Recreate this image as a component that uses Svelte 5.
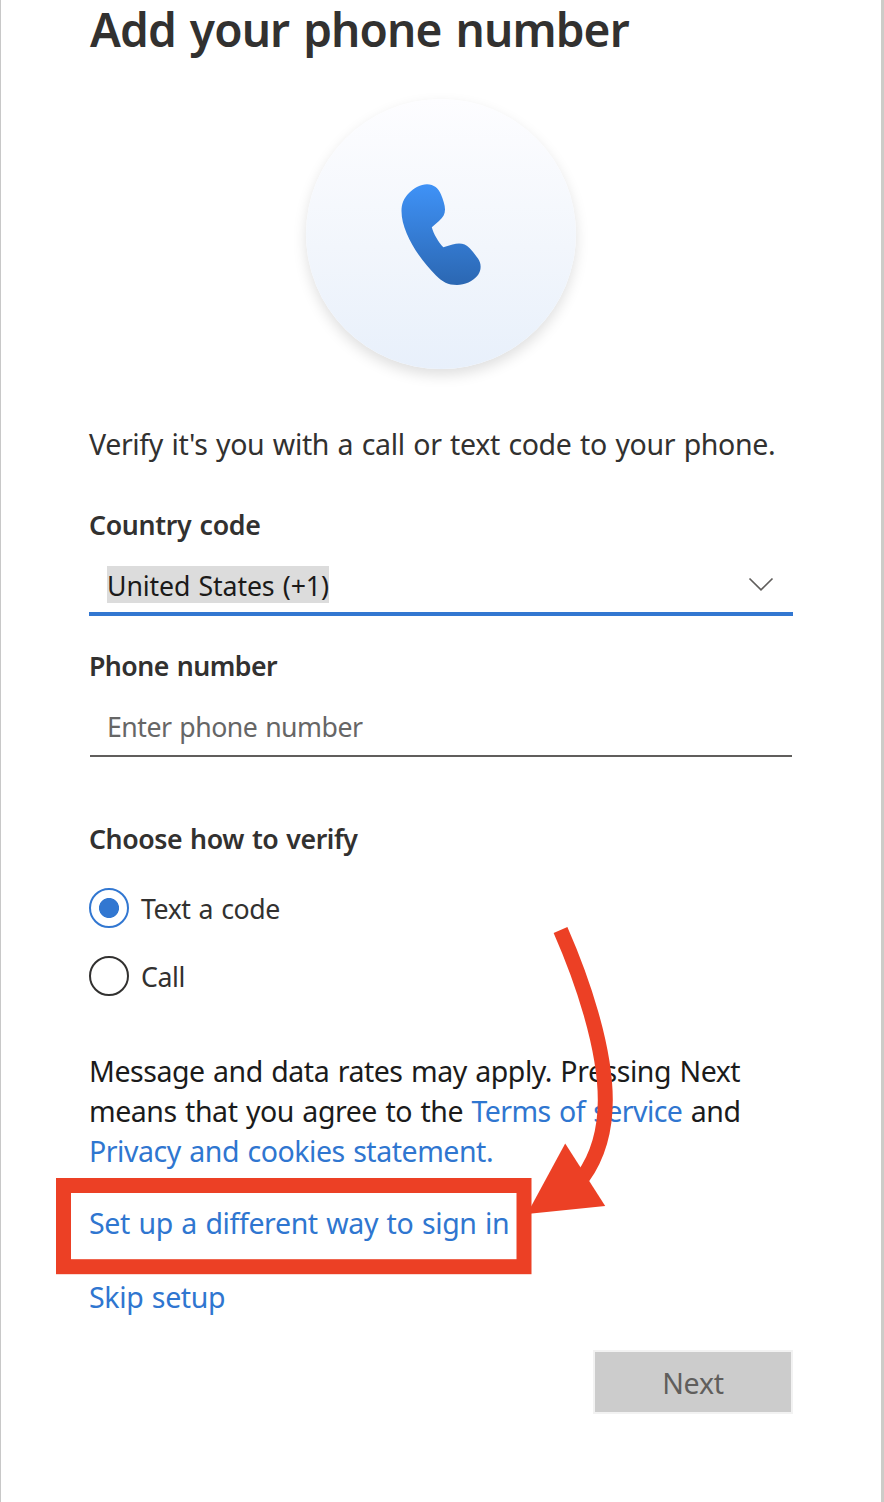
<script>
  let method = $state('text');
</script>

<main class="dialog">
  <h1>Add your phone number</h1>
  <div class="badge">
    <svg width="270" height="270" viewBox="306 99 270 270" aria-hidden="true">
      <defs>
        <linearGradient id="handset" x1="0" y1="0" x2="0" y2="1">
          <stop offset="0" stop-color="#3f92f7" />
          <stop offset="1" stop-color="#2b67b2" />
        </linearGradient>
      </defs>
      <path fill="url(#handset)" d="M401.5 211C401.5 204 403.5 198.500 409 193C414 188 420.500 184.300 427 184.300C434 184.300 438.500 188.500 441 194.500C443 199.500 445 205 445 209.500C445 214 443 217.500 439 221L431.800 227.200C433.500 234 438.500 242 443.300 247.300L452.500 244.500C460 242.500 465 243.500 469.500 248C472.500 251.200 475 254.500 478 258.500C481.500 263.500 481.500 270 478 275C473 281.500 464.500 285 457 285C448 285 442.500 282 436 275.500C418.500 258 401.500 232 401.500 211Z" />
    </svg>
  </div>
  <p class="intro">Verify it's you with a call or text code to your phone.</p>

  <div class="label country">Country code</div>
  <div class="field active">
    <span class="selected">United States (+1)</span>
    <svg width="26" height="14" viewBox="0 0 26 14" aria-hidden="true"><path d="M1.500 1.500L13 12.800L24.500 1.500" fill="none" stroke="#605e5c" stroke-width="1.700" /></svg>
  </div>
  <div class="label second">Phone number</div>
  <div class="field"><span class="hint">Enter phone number</span></div>

  <div class="label choose">Choose how to verify</div>
  <button class="option" class:on={method === 'text'} onclick={() => (method = 'text')}><i></i><span>Text a code</span></button>
  <button class="option" class:on={method === 'call'} onclick={() => (method = 'call')}><i></i><span>Call</span></button>

  <p class="legal">Message and data rates may apply. Pressing Next<br />means that you agree to the{' '}<a href="#terms" class="terms">Terms of service</a>{' '}and<br /><a href="#privacy">Privacy and cookies statement.</a></p>
  <div class="alternative">
    <a href="#other">Set up a different way to sign in</a>
    <svg class="callout" width="570" height="360" viewBox="50 920 570 360" aria-hidden="true">
      <rect x="63.500" y="1185.500" width="460.500" height="81.200" fill="none" stroke="#ec4025" stroke-width="15" />
      <path d="M560.500 930C582 979 605.300 1047 605.300 1100C605.300 1131 598 1156 583 1177" fill="none" stroke="#ec4025" stroke-width="15" />
      <path d="M565.200 1143.500L605.200 1206L527 1214Z" fill="#ec4025" />
    </svg>
  </div>
  <div class="skip"><a href="#skip">Skip setup</a></div>
  <div class="actions"><button class="next" disabled>Next</button></div>
</main>

<style>
  :global(body) { margin: 0; background: #fff; }
  .dialog { box-sizing: border-box; width: 884px; height: 1502px; padding: 1px 88px 0; border-left: 1px solid #c8c8c8; border-right: 3px solid #ccccc8; font-family: "Noto Sans", "Open Sans", sans-serif; font-size: 28.5px; line-height: 40px; word-spacing: 1.5px; color: #323130; overflow: hidden; }
  h1 { margin: 0; padding-left: 1px; font-size: 46px; line-height: 56px; font-weight: 600; letter-spacing: -.9px; word-spacing: 3px; white-space: nowrap; }
  .badge { width: 270px; height: 270px; margin: 42px auto 0 217px; border-radius: 50%; background: linear-gradient(#fdfdff, #f2f6fc 55%, #e8f0fb); box-shadow: 0 6px 14px rgba(0,0,0,.13); }
  .badge svg { display: block; }
  p { margin: 0; white-space: nowrap; }
  .intro { margin-top: 55px; letter-spacing: -.36px; }
  .label { margin-top: 31px; padding-top: 1px; font-size: 26.7px; line-height: 36px; font-weight: 600; letter-spacing: -.54px; }
  .label.country { margin-top: 42px; letter-spacing: -.31px; }
  .label.choose { margin-top: 63px; letter-spacing: -.44px; }
  .field { box-sizing: border-box; width: 702px; margin-left: 1px; height: 57px; margin-top: 16px; padding: 9px 17px 0; font-size: 26.7px; line-height: 36px; border-bottom: 2px solid #605e5c; display: flex; align-items: flex-start; justify-content: space-between; }
  .field.active { width: 704px; margin-left: 0; border-bottom: 4px solid #3277d1; padding: 7px 19px 0 18px; }
  .field svg { margin-top: 11px; }
  .selected { box-sizing: border-box; height: 37px; background: #dcdcdc; line-height: 39px; letter-spacing: -.13px; color: #1b1a19; }
  .hint { color: #666; letter-spacing: -.53px; }
  .option { display: flex; gap: 12px; height: 40px; margin: 31px 0 0; padding: 0; border: 0; background: none; font: inherit; font-size: 26.7px; line-height: 42px; letter-spacing: -.42px; word-spacing: inherit; color: inherit; }
  .option + .option { margin-top: 28px; }
  .option i { box-sizing: border-box; width: 40px; height: 40px; border: 2px solid #323130; border-radius: 50%; }
  .option.on i { border-color: #3277d1; background: radial-gradient(circle, #3277d1 9.600px, #fff 10.400px); }
  .legal { margin-top: 55px; color: #1b1b1b; letter-spacing: -.46px; }
  .terms { letter-spacing: -.57px; }
  a { color: #2f76d0; text-decoration: none; }
  .alternative { position: relative; height: 40px; margin-top: 32px; letter-spacing: -.38px; }
  .callout { position: absolute; left: -39px; top: -283px; pointer-events: none; }
  .skip { margin-top: 34px; letter-spacing: -.36px; }
  .actions { display: flex; justify-content: flex-end; margin-top: 33px; }
  .next { width: 200px; height: 64px; padding: 2px 0 0; border: 2px solid #f2f2f2; background: #ccc; color: #605e5c; font: inherit; letter-spacing: -.2px; }
</style>
